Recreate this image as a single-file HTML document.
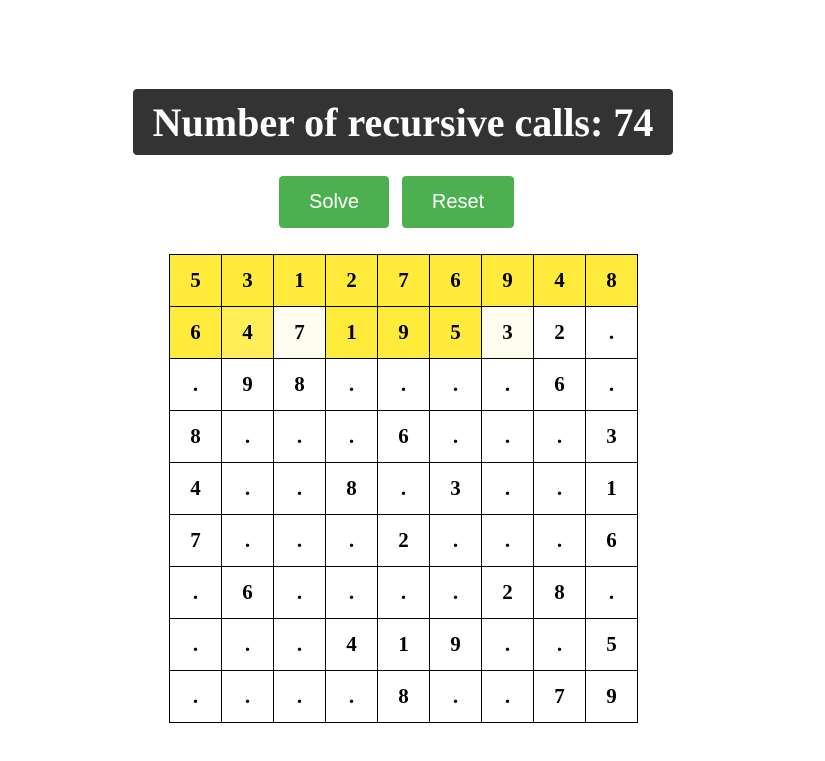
<!DOCTYPE html>
<html><head><style>
body{margin:0;background:#fff;width:825px;height:761px;position:relative;font-family:"Liberation Serif",serif}
.t{position:absolute;left:133px;top:89px;width:540px;height:66px;background:#333;border-radius:4px;color:#fff;font-weight:bold;font-size:40px;text-align:center;line-height:68px}
.b{position:absolute;top:176px;height:52px;background:#4caf50;color:#fff;border-radius:4px;font-family:"Liberation Sans",sans-serif;font-size:20px;text-align:center;line-height:52px}
table{position:absolute;left:169px;top:254px;border-collapse:collapse}
td{width:52px;height:52px;padding:0;border:1px solid #000;text-align:center;font-weight:bold;font-size:21px;box-sizing:border-box}
.y{background:#ffeb3b}.l{background:#ffee58}.p{background:#fffdf0}
</style></head><body>
<div class="t">Number of recursive calls: 74</div>
<div class="b" style="left:279px;width:110px">Solve</div>
<div class="b" style="left:402px;width:112px">Reset</div>
<table>
<tr><td class="y">5</td><td class="y">3</td><td class="y">1</td><td class="y">2</td><td class="y">7</td><td class="y">6</td><td class="y">9</td><td class="y">4</td><td class="y">8</td></tr>
<tr><td class="y">6</td><td class="l">4</td><td class="p">7</td><td class="y">1</td><td class="y">9</td><td class="y">5</td><td class="p">3</td><td>2</td><td>.</td></tr>
<tr><td>.</td><td>9</td><td>8</td><td>.</td><td>.</td><td>.</td><td>.</td><td>6</td><td>.</td></tr>
<tr><td>8</td><td>.</td><td>.</td><td>.</td><td>6</td><td>.</td><td>.</td><td>.</td><td>3</td></tr>
<tr><td>4</td><td>.</td><td>.</td><td>8</td><td>.</td><td>3</td><td>.</td><td>.</td><td>1</td></tr>
<tr><td>7</td><td>.</td><td>.</td><td>.</td><td>2</td><td>.</td><td>.</td><td>.</td><td>6</td></tr>
<tr><td>.</td><td>6</td><td>.</td><td>.</td><td>.</td><td>.</td><td>2</td><td>8</td><td>.</td></tr>
<tr><td>.</td><td>.</td><td>.</td><td>4</td><td>1</td><td>9</td><td>.</td><td>.</td><td>5</td></tr>
<tr><td>.</td><td>.</td><td>.</td><td>.</td><td>8</td><td>.</td><td>.</td><td>7</td><td>9</td></tr>
</table>
</body></html>
